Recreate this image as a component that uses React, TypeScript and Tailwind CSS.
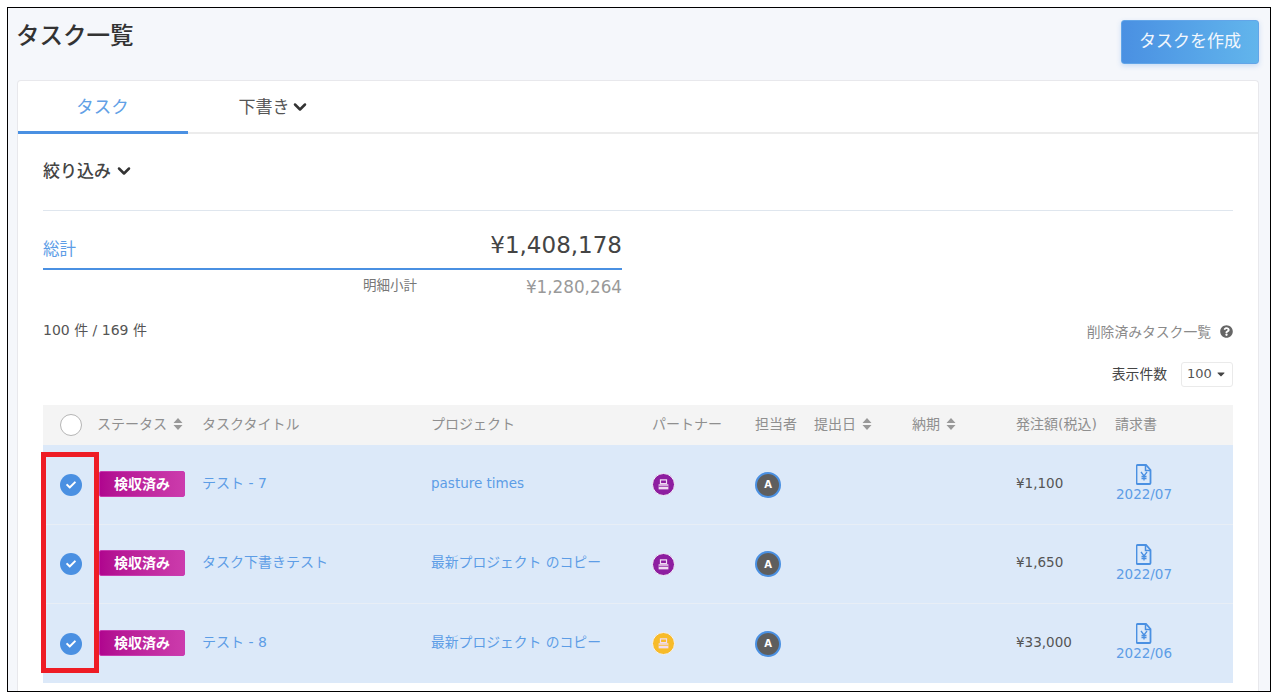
import React from "react";
import { ChevronDown } from "lucide-react";
import { FaQuestionCircle, FaCheck, FaCaretDown } from "react-icons/fa";

const font = "font-['DejaVu_Sans','Noto_Sans_CJK_JP',sans-serif]";
const cols = "grid grid-cols-[54px_105px_229px_221px_103px_59px_98px_104px_99px_118px] items-center";

function Sort() {
  return (
    <svg width="10" height="14" viewBox="0 0 10 14" className="ml-[6px] inline-block shrink-0">
      <path d="M5 1 L9.5 6 L0.5 6 Z M5 13 L0.5 8 L9.5 8 Z" fill="#999" />
    </svg>
  );
}

function Head({ label, sort }: { label: string; sort?: boolean }) {
  return (
    <div className="flex items-center pb-[2px] text-[14px] leading-[20px] text-[#8f8f8f] whitespace-nowrap">
      {label}
      {sort && <Sort />}
    </div>
  );
}

function Partner({ color }: { color: string }) {
  return (
    <div className="flex h-[23px] w-[23px] items-center justify-center rounded-full border-[1.5px] border-[#f3f3f9]" style={{ backgroundColor: color }}>
      <svg width="13" height="13" viewBox="0 0 12 12">
        <path d="M3.2 1.8h5.6v3.4H3.2Z" fill="none" stroke="#f0dcf2" strokeWidth="1.1" />
        <path d="M1.5 5.8h9v4.7h-9Z" fill="#f0dcf2" />
        <path d="M1.5 7.6h9" stroke={color} strokeWidth="0.9" />
      </svg>
    </div>
  );
}

function Row({ title, project, latin, color, amount, date, first, last }: { title: string; project: string; latin?: boolean; color: string; amount: string; date: string; first?: boolean; last?: boolean }) {
  return (
    <div className={`${cols} ${first ? "h-[80px]" : "h-[79px]"} bg-[#dce9f9] ${last ? "" : "border-b border-[#e8eef6]"}`}>
      <div className="flex justify-center pl-[1px]">
        <div className="flex h-[22px] w-[22px] items-center justify-center rounded-full bg-[#4a90e2] text-white">
          <FaCheck size={10} />
        </div>
      </div>
      <div className="pb-[2px]">
        <div className="ml-[2px] flex h-[26px] w-[86px] items-center justify-center rounded-[2px] border border-[#c93ab0] bg-gradient-to-r from-[#b0058f] to-[#cc3bac] text-[14px] leading-[20px] font-bold text-white">
          検収済み
        </div>
      </div>
      <div className="pb-[4px] text-[14px] leading-[20px] text-[#5d9de6]">{title}</div>
      <div className={`pb-[4px] leading-[20px] text-[#5d9de6] ${latin ? "text-[13.5px]" : "text-[13.8px]"}`}>
        {project}
      </div>
      <div><Partner color={color} /></div>
      <div>
        <div className="flex h-[26px] w-[26px] items-center justify-center rounded-full border-2 border-[#4a90e2] bg-[#5e5e5e] text-[10px] font-bold text-white">A</div>
      </div>
      <div />
      <div />
      <div className="pb-[4px] text-[13.5px] leading-[20px] text-[#555]">{amount}</div>
      <div className="flex w-[58px] flex-col items-center pb-[2px]">
        <svg width="16" height="21" viewBox="0 0 16 21">
          <path d="M1.5 1h8.5l4.5 5v13a1 1 0 0 1-1 1h-12a1 1 0 0 1-1-1V2a1 1 0 0 1 1-1Z" fill="none" stroke="#4a90e2" strokeWidth="1.8" />
          <path d="M9.5 1v5.5h5" fill="none" stroke="#4a90e2" strokeWidth="1.5" />
          <path d="M5 8l3 4 3-4M8 12v4.5M5.5 12.5h5M5.5 14.5h5" fill="none" stroke="#4a90e2" strokeWidth="1.3" />
        </svg>
        <div className="mt-[1px] text-[13.5px] leading-[17px] text-[#5d9de6]">{date}</div>
      </div>
    </div>
  );
}

export default function App() {
  return (
    <div className={`relative h-[699px] w-[1282px] overflow-hidden bg-white pl-[7px] pt-[7px] ${font}`}>
      <div className="flex h-[685px] w-[1264px] flex-col overflow-hidden border border-black bg-[#f5f7fb] pl-[9px] pr-[11px]">
        <div className="flex h-[72px] shrink-0 items-start justify-between">
          <h1 className="-ml-[1px] pt-[8px] text-[23.5px] font-medium leading-[40px] text-[#333]">タスク一覧</h1>
          <button className="mt-[12px] flex h-[44px] w-[138px] items-center justify-center rounded-[3px] border border-[#62a5e8] bg-gradient-to-r from-[#4a90e2] to-[#62b5ec] text-[17px] text-[#f2f7fd] shadow-[0_2px_5px_rgba(74,144,226,0.25)]">
            タスクを作成
          </button>
        </div>
        <div className="min-h-0 flex-1 rounded-t-[4px] border-x border-t border-[#e8e8ec] bg-white">
          <div className="flex h-[53px] items-stretch border-b-2 border-[#ececec]">
            <div className="-mb-[2px] flex w-[170px] items-center justify-center border-b-[3px] border-[#4a90e2] pr-[1px] pt-[2px] text-[17.5px] leading-[26px] text-[#62a0e6]">タスク</div>
            <div className="flex w-[169px] items-center justify-center pl-[1px] pt-[1px] text-[17px] leading-[26px] text-[#555]">
              下書き<ChevronDown size={20} strokeWidth={3} className="-mr-[2px] text-[#333]" />
            </div>
          </div>
          <div className="px-[25px]">
            <div className="flex h-[77px] items-center border-b border-[#dfe6ee] pb-[2px] text-[15.5px] leading-[24px] font-medium text-[#444]">
              <span className="text-[17px]">絞り込み</span><ChevronDown size={20} strokeWidth={3} className="ml-[3px] text-[#333]" />
            </div>
            <div className="w-[579px]">
              <div className="flex h-[59px] items-end justify-between border-b-2 border-[#4a90e2] pb-[8px]">
                <span className="-mb-[2px] text-[16.5px] leading-[24px] text-[#5d9de6]">総計</span>
                <span className="text-[23px] leading-[30px] text-[#444]">¥1,408,178</span>
              </div>
              <div className="flex h-[34px] items-center justify-end">
                <span className="mr-[109px] pb-[4px] text-[13.5px] leading-[20px] text-[#777]">明細小計</span>
                <span className="text-[16.8px] leading-[24px] text-[#999]">¥1,280,264</span>
              </div>
            </div>
            <div className="flex h-[40px] items-center justify-between pt-[11px]">
              <span className="text-[14px] leading-[20px] text-[#555]">100 件 / 169 件</span>
              <span className="flex items-center pt-[4px] text-[13.8px] leading-[20px] text-[#8a8a8a]">
                削除済みタスク一覧<FaQuestionCircle size={13} className="ml-[9px] text-[#666]" />
              </span>
            </div>
            <div className="flex h-[50px] items-center justify-end pt-[10px]">
              <span className="mr-[14px] text-[13.8px] leading-[20px] text-[#444]">表示件数</span>
              <div className="flex h-[25px] w-[52px] items-center justify-center gap-[3px] rounded-[3px] border border-[#eaeaea] text-[13px] leading-[20px] text-[#555]">
                100<FaCaretDown size={12} className="text-[#444]" />
              </div>
            </div>
            <div className="mt-[11px]">
              <div className={`${cols} h-[40px] bg-[#f4f4f4]`}>
                <div className="flex justify-center pl-[1px]">
                  <div className="h-[22px] w-[22px] rounded-full border border-[#b5b5b5] bg-white" />
                </div>
                <Head label="ステータス" sort />
                <Head label="タスクタイトル" />
                <Head label="プロジェクト" />
                <Head label="パートナー" />
                <Head label="担当者" />
                <Head label="提出日" sort />
                <Head label="納期" sort />
                <Head label="発注額(税込)" />
                <Head label="請求書" />
              </div>
              <Row first title="テスト - 7" project="pasture times" latin color="#8e1ea0" amount="¥1,100" date="2022/07" />
              <Row title="タスク下書きテスト" project="最新プロジェクト のコピー" color="#8e1ea0" amount="¥1,650" date="2022/07" />
              <Row last title="テスト - 8" project="最新プロジェクト のコピー" color="#f7bb2a" amount="¥33,000" date="2022/06" />
            </div>
          </div>
        </div>
      </div>
      <div className="pointer-events-none absolute left-[41px] top-[452px] h-[221px] w-[58px] border-[5px] border-[#ee1c25]" />
    </div>
  );
}
